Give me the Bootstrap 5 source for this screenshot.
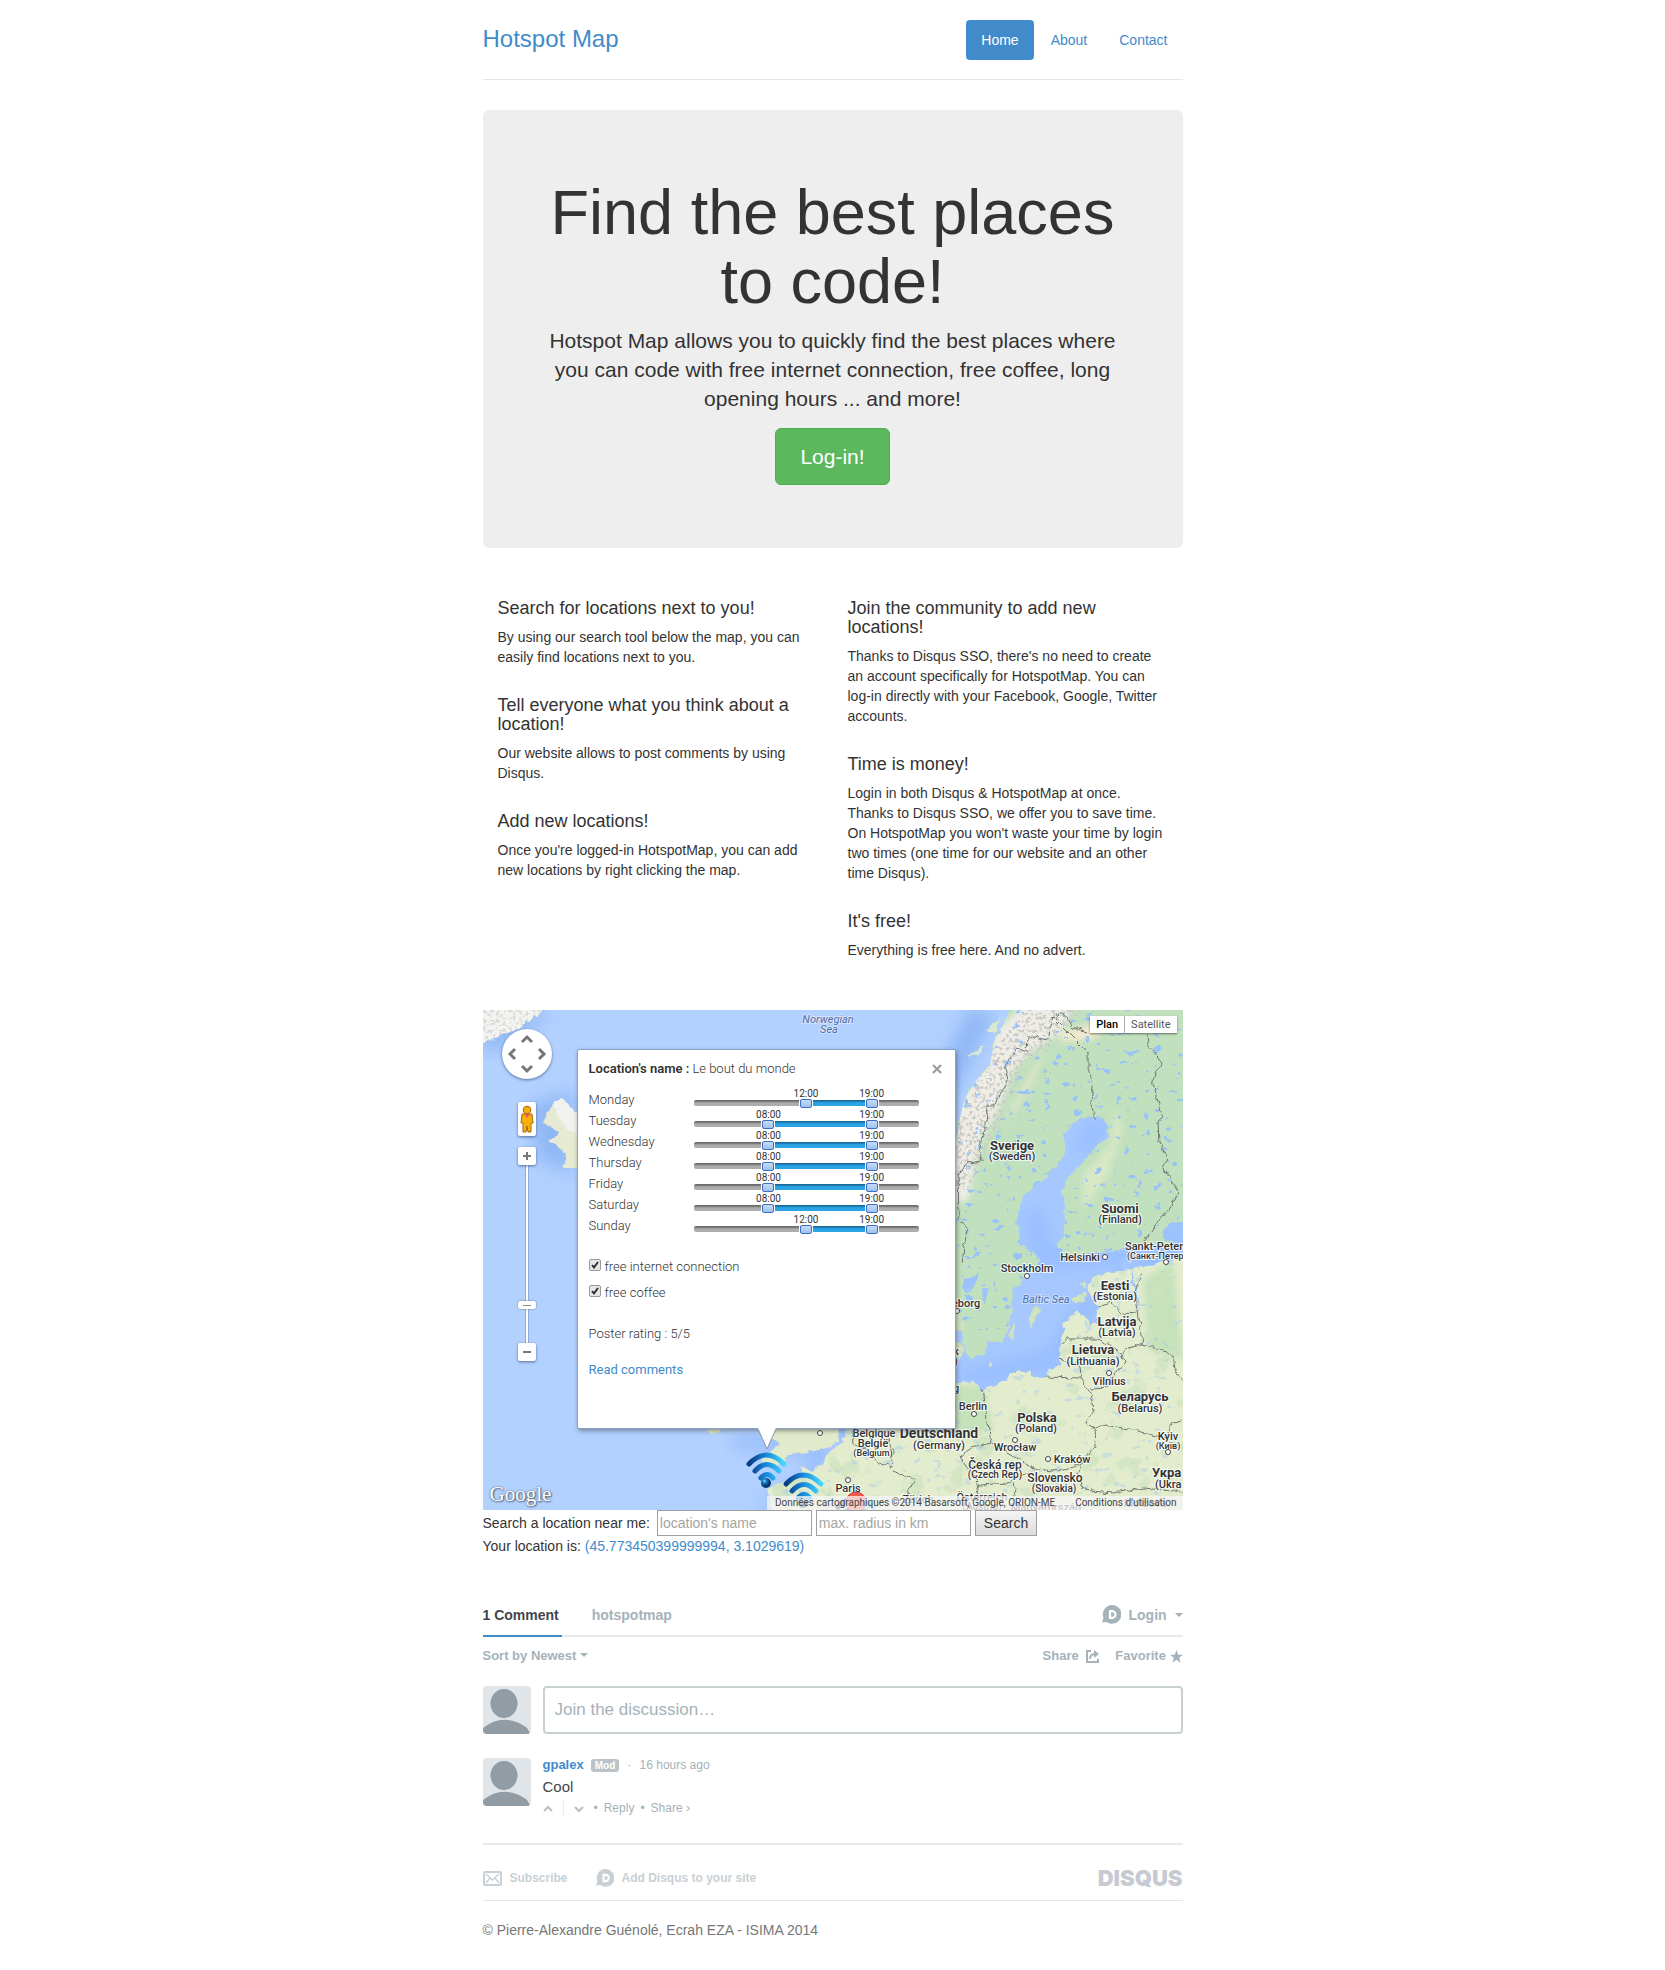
<!DOCTYPE html>
<html lang="en">
<head>
<meta charset="utf-8">
<meta name="viewport" content="width=device-width, initial-scale=1">
<title>Hotspot Map</title>
<link href="https://cdn.jsdelivr.net/npm/bootstrap@5.3.0/dist/css/bootstrap.min.css" rel="stylesheet">
<style>
body{font-family:"Liberation Sans",Arial,sans-serif;font-size:14px;line-height:20px;color:#333}
a{color:#428bca;text-decoration:none}
.page{max-width:700px}
.site-head{padding:20px 0 19px;border-bottom:1px solid #e5e5e5;margin-bottom:30px}
.brand{font-size:24px;line-height:38px;color:#428bca;font-weight:400}
.nav-pills{gap:2px}
.nav-pills .nav-link{padding:10px 15px;color:#428bca;border-radius:4px}
.nav-pills .nav-link.active{background:#428bca;color:#fff}
.hero{background:#eee;border-radius:6px;padding:68px 60px 63px;text-align:center}
.hero h1{font-size:63px;line-height:69px;font-weight:400;margin-bottom:10px}
.hero p{font-size:21px;line-height:29px;margin-bottom:15px}
.btn-login{background:#5cb85c;border:1px solid #4cae4c;color:#fff;font-size:21px;line-height:27px;padding:14px 24px;border-radius:6px}
.feature-row{margin:51px 0 50px}
.feature-row .col-6{padding:0 15px}
.feature-row h4{font-size:18px;line-height:19px;font-weight:400;margin-bottom:9px}
.feature-row p{margin-bottom:29px}
.feature-row p:last-child{margin-bottom:0}
/* map */
.map-box{position:relative;height:500px;overflow:hidden;background:#b3d1ff;font-family:Roboto,sans-serif}
.map-art{position:absolute;inset:0;width:100%;height:100%}
.map-ctl{position:absolute;background:#fff;border:0;padding:0;border-radius:2px;box-shadow:0 1px 3px rgba(40,70,120,.7);display:flex;align-items:center;justify-content:center}
.ctl-pan{left:19px;top:19px;width:50px;height:50px;border-radius:50%}
.ctl-peg{left:35px;top:92px;width:18px;height:34px}
.ctl-in{left:35px;top:137px;width:18px;height:18px}
.ctl-out{left:35px;top:333px;width:18px;height:18px}
.zoom-range{position:absolute;left:-45px;top:235px;width:178px;height:18px;margin:0;transform:rotate(-90deg);-webkit-appearance:none;appearance:none;background:linear-gradient(transparent 7px,#8fabd6 7px,#8fabd6 8px,#fff 8px,#fff 10px,#8fabd6 10px,#8fabd6 11px,transparent 11px)}
.zoom-range::-webkit-slider-thumb{-webkit-appearance:none;width:8px;height:18px;border-radius:2px;background:linear-gradient(90deg,transparent 3px,#888 3px,#888 4px,transparent 4px) center/100% 8px no-repeat,#fff;box-shadow:0 0 2px #567}
.map-type{position:absolute;top:6px;right:6px;background:#fff;box-shadow:0 1px 2px rgba(0,0,0,.5)}
.map-type button{border:0;background:#fff;font-size:11px;line-height:17px;padding:0 6px;color:#565656}
.map-type button:first-child{color:#000;font-weight:500;border-right:1px solid #aaa}
.map-credit{position:absolute;right:0;bottom:0;height:14px;padding:0 6px 0 8px;gap:20px;background:rgba(245,245,245,.75);font-size:10px;line-height:14px;color:#444}
.map-credit a{color:#444}
.g-logo{position:absolute;left:7px;bottom:6px;font:21px/20px "Liberation Serif",serif;color:#fff;text-shadow:0 0 2px #456,1px 1px 2px #567}
/* info window */
.info-pop{position:absolute;left:94px;top:39px;width:379px;height:380px;background:#fff;border:1px solid #87a2cb;border-radius:2px;box-shadow:1px 2px 4px rgba(60,60,60,.5);padding:8px 11px;font-size:13px;line-height:21px;font-weight:300}
.info-pop b{font-weight:600}
.info-tip{position:absolute;left:273px;top:418px;width:22px;height:22px}
.info-pop .btn-x{background:none;border:0;padding:0;line-height:0}
.day-list{margin-top:10px}
.day-line{height:21px}
.day-name{width:105px}
.slot{position:relative;width:225px;height:21px}
.slot-track{position:absolute;left:0;right:0;top:11px;height:6px;border-radius:2px;background:linear-gradient(#6b6b6b 1px,#8e8e8e 2px,#adadad 3px)}
.slot-fill{position:absolute;top:0;bottom:0;background:linear-gradient(#1d6a96 1px,#2196d6 2px,#2ba3e4 3px)}
.slot output{position:absolute;top:0;width:40px;margin-left:-20px;text-align:center;font-size:10px;line-height:10px;font-weight:400;padding:0}
.slot input{position:absolute;left:-6px;width:237px;top:10px;height:9px;margin:0;-webkit-appearance:none;appearance:none;background:none;pointer-events:none}
.slot input::-webkit-slider-thumb{-webkit-appearance:none;pointer-events:auto;width:12px;height:9px;border:1px solid #3f6cc4;border-radius:2px;background:linear-gradient(#c5dcf6,#9cc3ee);box-shadow:0 0 0 1px #fff}
.opt-list{margin-top:17px}
.opt-line{height:26px;gap:4px}
.opt-line input{-webkit-appearance:none;appearance:none;width:12px;height:12px;margin:0;border:1px solid #999;border-radius:2px;background:#e6e6e6;margin-bottom:3px}
.opt-line input:checked{background:url("data:image/svg+xml,%3Csvg xmlns='http://www.w3.org/2000/svg' viewBox='0 0 10 10'%3E%3Cpath d='M2 5.2 4 7.4 8 2' fill='none' stroke='%23333' stroke-width='2'/%3E%3C/svg%3E") #e6e6e6}
.rating{margin-top:18px}
.more-link{margin-top:15px}
.more-link a{font-weight:400}
/* search */
.search-line{gap:4px;height:26px}
.search-line label{margin-right:3px}
.search-line input,.search-line button{height:26px;border:1px solid #a0a0a0;font-size:14px;color:#333}
.search-line input{width:155px;padding:0 2px}
.search-line input::placeholder{color:#a5a5a0}
.search-line button{padding:0 8px;background:linear-gradient(#f4f4f4,#dcdcdc)}
/* comments */
.dq{margin-top:49px;color:#a5b2b9}
.dq a,.dq button{color:#a5b2b9}
.dq-tabs{border-bottom:2px solid #e7ebec;font-weight:700;height:32px;gap:30px}
.dq-tabs .tab-on{color:#3f4549;border-bottom:2px solid #428bca;height:32px;padding-right:3px}
.dq-bar{font-size:13px;font-weight:700;margin-top:9px}
.dq-bar,.dq-tabs{line-height:20px}
.bare{background:none;border:0;padding:0;font-weight:inherit}
.tri{display:inline-block;border:4px solid transparent;border-top-color:#a5b2b9;border-bottom:0;vertical-align:3px;margin-left:4px}
.who{width:48px;height:48px;border-radius:4px;flex:none}
.thread-row{gap:12px;margin-top:20px}
.join{border:2px solid #c9d0d3;border-radius:4px;height:48px;padding:0 10px;font-size:17px;width:100%}
.join::placeholder{color:#a5b2b9}
.dq-post{margin-top:24px;height:85px}
.dq-meta{font-size:13px;line-height:14px}
.dq-meta .author{color:#428bca;font-weight:700;margin-right:7px}
.mod-tag{background:#bcc3c8;color:#fff;font-size:10px;line-height:13px;font-weight:700;border-radius:3px;padding:0 4px}
.when{font-size:12px}
.post-text{font-size:15px;line-height:20px;color:#3f4549;margin-top:5px}
.dq-acts{font-size:12px;line-height:22px;gap:6px}
.dq-foot{border-top:2px solid #e7ebec;height:57px;padding-top:15px;font-size:12px;font-weight:700}
.dq-foot a{color:#c9d0d5}
.dq-foot .dq-word{font-family:Inter,sans-serif;font-size:22px;font-weight:900;color:#c7cad2}
.site-foot{border-top:1px solid #e5e5e5;padding:19px 0 30px;color:#777}
</style>
</head>
<body>
<div class="page container-fluid mx-auto p-0">
<header class="site-head d-flex justify-content-between">
<h3 class="brand m-0">Hotspot Map</h3>
<nav><ul class="nav nav-pills">
<li class="nav-item"><a class="nav-link active" href="#">Home</a></li>
<li class="nav-item"><a class="nav-link" href="#">About</a></li>
<li class="nav-item"><a class="nav-link" href="#">Contact</a></li>
</ul></nav>
</header>

<section class="hero">
<h1>Find the best places to code!</h1>
<p>Hotspot Map allows you to quickly find the best places where you can code with free internet connection, free coffee, long opening hours ... and more!</p>
<button type="button" class="btn btn-login d-block mx-auto">Log-in!</button>
</section>

<section class="row feature-row">
<div class="col-6">
<h4>Search for locations next to you!</h4>
<p>By using our search tool below the map, you can easily find locations next to you.</p>
<h4>Tell everyone what you think about a location!</h4>
<p>Our website allows to post comments by using Disqus.</p>
<h4>Add new locations!</h4>
<p>Once you're logged-in HotspotMap, you can add new locations by right clicking the map.</p>
</div>
<div class="col-6">
<h4>Join the community to add new locations!</h4>
<p>Thanks to Disqus SSO, there's no need to create an account specifically for HotspotMap. You can log-in directly with your Facebook, Google, Twitter accounts.</p>
<h4>Time is money!</h4>
<p>Login in both Disqus &amp; HotspotMap at once. Thanks to Disqus SSO, we offer you to save time. On HotspotMap you won't waste your time by login two times (one time for our website and an other time Disqus).</p>
<h4>It's free!</h4>
<p>Everything is free here. And no advert.</p>
</div>
</section>

<section class="map-box">
<svg class="map-art" viewBox="0 0 700 500" preserveAspectRatio="xMidYMid slice" aria-label="Map of northern Europe">
<defs>
<filter id="rough" x="-5%" y="-5%" width="110%" height="110%" color-interpolation-filters="sRGB"><feTurbulence type="fractalNoise" baseFrequency=".12" numOctaves="3" seed="4"/><feDisplacementMap in="SourceGraphic" scale="7" xChannelSelector="R" yChannelSelector="G"/></filter>
<filter id="lakes" x="0" y="0" width="100%" height="100%" color-interpolation-filters="sRGB"><feTurbulence type="fractalNoise" baseFrequency=".1 .14" numOctaves="4" seed="11"/><feColorMatrix values="0 0 0 0 .6  0 0 0 0 .76  0 0 0 0 .97  0 22 0 0 -15"/><feComposite in2="SourceGraphic" operator="in"/></filter>
<filter id="relief" x="0" y="0" width="100%" height="100%" color-interpolation-filters="sRGB"><feTurbulence type="fractalNoise" baseFrequency=".3" numOctaves="3" seed="7"/><feColorMatrix values="0 0 0 0 .8  0 0 0 0 .8  0 0 0 0 .78  0 0 8 0 -4.1"/><feComposite in2="SourceGraphic" operator="in"/></filter>
<filter id="patch" x="0" y="0" width="100%" height="100%" color-interpolation-filters="sRGB"><feTurbulence type="fractalNoise" baseFrequency=".045" numOctaves="4" seed="21"/><feColorMatrix values="0 0 0 0 .8  0 0 0 0 .89  0 0 0 0 .75  8 0 0 0 -4.6"/><feComposite in2="SourceGraphic" operator="in"/></filter>
<filter id="soft"><feGaussianBlur stdDeviation="9"/></filter>
<filter id="soft2"><feGaussianBlur stdDeviation="3"/></filter>
<linearGradient id="wifi"><stop offset="0" stop-color="#083a80"/><stop offset=".45" stop-color="#1583d6"/><stop offset="1" stop-color="#45d8ff"/></linearGradient>
<radialGradient id="ball" cx=".35" cy=".3"><stop offset="0" stop-color="#8fdcff"/><stop offset=".4" stop-color="#1a7cc8"/><stop offset="1" stop-color="#06386f"/></radialGradient>
<path id="north" d="M530-5 520 15 512 28 507 55 492 72 482 88 477 108 474 128 466 150V305L473 312 478 322 482 342 490 349 500 345 505 332 520 332 525 318 530 295 529 282 539 270 547 262 556 250 549 242 537 235 534 212 539 188 557 172 574 157 582 142 580 128 587 115 604 106 620 108 626 118 624 128 614 135 604 148 585 168 579 182 582 198 581 222 575 235 580 245 607 243 637 240 664 235 705 240V-5Z"/>
<path id="south" d="M705 240 690 250 659 257 637 262 614 265 605 275 607 285 615 295 614 313 607 315 600 305 594 300 582 312 578 325 577 355 565 360 562 368 550 367 547 362 534 362 517 372 500 382 490 370 466 374V400L365 412 360 432 345 443 340 453 327 462 317 455 322 468 300 472 284 478 287 490 290 505H705Z"/>
<g id="wave"><path d="M3 12Q20-6 38 12M9 19Q21 6 33 19M15 26Q21 19 27 26" fill="none" stroke="url(#wifi)" stroke-width="5" stroke-linecap="round"/><circle cx="20" cy="31" r="5" fill="url(#ball)"/></g>
</defs>
<rect width="700" height="500" fill="#b3d1ff"/>
<path d="M500 0 455 90 450 390 350 420" fill="none" stroke="#8fb7f5" stroke-width="26" filter="url(#soft)"/>
<path d="M45 95 90 80V165L55 150Z" fill="#8fb7f5" filter="url(#soft)"/>
<path d="M0 5 70 0 30 32 0 45Z" fill="#8fb7f5" filter="url(#soft)"/>
<path d="M250 430 340 440 330 470 280 500" fill="none" stroke="#93b9f8" stroke-width="14" filter="url(#soft)"/>
<path d="M530 100H640V380H466V250H530Z" fill="#a6c8ff"/>
<path d="M620 110 600 140M550 200 560 250 700 240 600 300 570 350 480 370" fill="none" stroke="#93baff" stroke-width="14" filter="url(#soft)"/>
<g filter="url(#rough)">
<path d="M-5-5H66L47 10 27 22-5 35Z" fill="#f3f4f2"/>
<path d="M60 112 69 95 79 87 87 98 98 105V158H80L84 146 75 135 65 131 77 123Z" fill="#e6ead2"/>
<path d="M69 95 79 87 87 98 98 105 96 125 80 115Z" fill="#f1f1ee"/>
<use href="#north" fill="#c1e0bd"/><use href="#south" fill="#e3eccd"/>
<path d="M288 412H355L356 432 340 438 307 446 300 452 282 455 278 448 296 435 285 425ZM222 420 246 416 230 424Z" fill="#e1ebcb"/>
<path d="M466 290 476 295 482 320 468 322ZM545 310 553 295 558 298 548 317ZM525 325 532 310 530 330ZM589 288 603 281 602 291 592 295ZM596 274 604 271 602 279ZM505 351 511 353 507 357ZM468 330 480 335 478 350 468 345Z" fill="#cfe3bf"/>
<path d="M502 20 517 8 512 24ZM484 46 503 36 495 44Z" fill="#dbe9d3"/>
<path d="M678 222 690 212 705 215V240L690 235ZM481 268 496 265 489 283 481 282ZM499 280 507 277 501 296ZM505 56 515 67 510 62ZM648 255 658 300 650 280ZM640 40 655 42 647 47Z" fill="#9cc3fb"/>
</g>
<clipPath id="cn"><use href="#north"/></clipPath><clipPath id="cs"><use href="#south"/></clipPath>
<g clip-path="url(#cn)"><g filter="url(#soft2)">
<path d="M540-5H590L578 22 550 40 530 60 515 100 498 130 485 190 466 195V110L484 80 500 55 515 20Z" fill="#efede6"/>
<path d="M575 22 630 10 610 30 580 32ZM565 35 550 70 535 95 520 115" fill="#f0e8cd"/>
<path d="M632 95 640 120 625 165 600 200 600 165 628 135Z" fill="#d9e8c5"/></g>
<rect x="466" width="234" height="320" filter="url(#lakes)"/><path d="M540 0H600L570 30 540 55 515 120 485 180H472V120L505 50Z" filter="url(#relief)"/></g>
<g clip-path="url(#cs)"><path d="M466 375H500L510 420 473 430ZM690 250 660 270 665 340 700 350Z" fill="#c6e2bb" filter="url(#soft2)"/><path d="M470 240H700V500H280V400Z" filter="url(#patch)" opacity=".7"/><path d="M470 240H700V500H280V400Z" filter="url(#lakes)" opacity=".35"/></g>
<path d="M0 0H60L30 22 0 33Z" filter="url(#relief)" opacity=".6"/>
<path filter="url(#rough)" fill="none" stroke="#6c7570" d="M570 7 565 30 545 25 544 42 534 38 522 57 525 70 512 95H504L503 118 494 138 499 150 485 152 475 165 476 208 484 218 479 252M570 7 590 27 605 42V58L610 75 608 92 612 102V110M572 8 580 2 590 17 604 22M664 25 665 35 679 52 669 72 680 108 675 112 676 132 685 148 680 158 696 182 684 202 660 232M659 263 652 280 655 300 659 334M640 345 642 338 659 334M615 296 628 292 640 303 654 304M580 333 585 329 615 329 625 334 640 345M659 334 675 338 690 345 692 360 700 373M577 350 597 355 598 368 562 367M598 368 608 383 610 400 603 410 611 420 612 435 598 455 595 465M608 419 622 415 650 420 670 425 682 428 690 412 700 410M640 345 642 352 630 365 625 377 608 378M500 378 502 395 508 433 520 440 535 448 550 458 575 462 598 455M508 433 490 438 477 446 488 462 497 475 525 473 545 462M497 475 490 490M530 473 533 490M595 465 600 480 630 483 660 478 700 482M369 420 370 433 385 440 395 452 408 458 410 440 405 430M410 460 431 469 420 495"/>
<g font-family="Roboto,sans-serif" text-anchor="middle" paint-order="stroke" stroke="#fff" stroke-opacity=".8" stroke-width="2" fill="#333" font-size="11" font-weight="500">
<g font-style="italic" font-weight="400" fill="#4f6fa3" stroke-opacity=".4"><text x="345" y="13">Norwegian</text><text x="346" y="23">Sea</text><text x="563" y="293">Baltic Sea</text></g>
<g font-size="13" font-weight="700"><text x="529" y="140">Sverige</text><text x="637" y="203">Suomi</text><text x="632" y="280">Eesti</text><text x="634" y="316">Latvija</text><text x="610" y="344">Lietuva</text><text x="657" y="391">Беларусь</text><text x="554" y="412">Polska</text><text x="456" y="428" font-size="14">Deutschland</text><text x="669" y="467" text-anchor="start">Укра</text></g>
<text x="529" y="150">(Sweden)</text><text x="637" y="213">(Finland)</text><text x="632" y="290">(Estonia)</text><text x="634" y="326">(Latvia)</text><text x="610" y="355">(Lithuania)</text><text x="657" y="402">(Belarus)</text><text x="553" y="422">(Poland)</text><text x="456" y="439">(Germany)</text><text x="672" y="478" text-anchor="start">(Ukra</text>
<text x="642" y="240" text-anchor="start">Sankt-Peter</text><text x="644" y="249" font-size="9" text-anchor="start">(Санкт-Петер</text><text x="597" y="251">Helsinki</text><text x="544" y="262">Stockholm</text><text x="483" y="297">eborg</text><text x="626" y="375">Vilnius</text><text x="490" y="400">Berlin</text><text x="532" y="441">Wrocław</text><text x="589" y="453">Kraków</text><text x="685" y="430">Kyiv</text><text x="685" y="439" font-size="9">(Київ)</text><text x="512" y="459" font-size="12">Česká rep</text><text x="512" y="468" font-size="10">(Czech Rep)</text><text x="572" y="472" font-size="12">Slovensko</text><text x="571" y="482" font-size="10">(Slovakia)</text><text x="499" y="491">Österreich</text><text x="499" y="500" font-size="10">(Austria)</text><text x="563" y="501">Magyarország</text><text x="435" y="493">Zürich</text><text x="662" y="497">Moldova</text>
<text x="391" y="427">Belgique</text><text x="390" y="437">België</text><text x="390" y="446" font-size="9">(Belgium)</text><text x="365" y="482">Paris</text><text x="336" y="418">London</text><text x="473" y="345">k</text><text x="473" y="355">)</text><text x="473" y="382">g</text>
</g>
<g fill="#fff" stroke="#444"><circle cx="544" cy="266" r="2.5"/><circle cx="622" cy="247" r="2.5"/><circle cx="683" cy="252" r="2.5"/><circle cx="474" cy="301" r="2.5"/><circle cx="626" cy="363" r="2.5"/><circle cx="491" cy="404" r="2.5"/><circle cx="532" cy="430" r="2.5"/><circle cx="565" cy="449" r="2.5"/><circle cx="685" cy="442" r="2.5"/><circle cx="365" cy="470" r="2.5"/><circle cx="337" cy="423" r="2.5"/></g>
<use href="#wave" x="263" y="442"/><use href="#wave" x="300" y="462"/><use href="#wave" x="352" y="485"/>
<circle cx="373" cy="492" r="10" fill="#ef5b50" stroke="#c7443c"/>
</svg>

<button type="button" class="map-ctl ctl-pan" aria-label="Pan"><svg width="42" height="42" viewBox="0 0 42 42" fill="none" stroke="#777" stroke-width="3"><path d="m16 9 5-5 5 5M16 33l5 5 5-5M9 16l-5 5 5 5M33 16l5 5-5 5"/></svg></button>
<button type="button" class="map-ctl ctl-peg" aria-label="Street View"><svg width="14" height="28" viewBox="0 0 14 28" fill="#f7b10c" stroke="#a8640b"><path d="M2 9h10l1 9h-2v9H8l-1-6-1 6H3v-9H1Z"/><path d="m4 9 3 4 3-4Z" fill="#ee5d5d" stroke="none"/><circle cx="7" cy="5" r="3.8"/></svg></button>
<input class="zoom-range" type="range" min="0" max="100" value="20" aria-label="Zoom level">
<button type="button" class="map-ctl ctl-in" aria-label="Zoom in"><svg width="10" height="10"><path d="M1 5h8M5 1v8" stroke="#777" stroke-width="2"/></svg></button>
<button type="button" class="map-ctl ctl-out" aria-label="Zoom out"><svg width="10" height="10"><path d="M1 5h8" stroke="#777" stroke-width="2"/></svg></button>
<div class="map-type d-flex"><button type="button">Plan</button><button type="button">Satellite</button></div>
<div class="g-logo">Google</div>
<div class="map-credit d-flex"><span>Données cartographiques ©2014 Basarsoft, Google, ORION-ME</span><a href="#">Conditions d'utilisation</a></div>

<div class="info-pop">
<div class="d-flex justify-content-between align-items-center"><div><b>Location's name :</b> Le bout du monde</div><button type="button" class="btn-x" aria-label="Close"><svg width="14" height="10"><path d="m3 1 8 8M11 1 3 9" stroke="#999" stroke-width="2"/></svg></button></div>
<div class="day-list">
<div class="d-flex day-line"><div class="day-name">Monday</div><div class="slot"><div class="slot-track"><div class="slot-fill" style="left:50%;right:20.83%"></div></div><output style="left:50%">12:00</output><output style="left:79.17%">19:00</output><input type="range" max="24" value="12" aria-label="Monday opens"><input type="range" max="24" value="19" aria-label="Monday closes"></div></div>
<div class="d-flex day-line"><div class="day-name">Tuesday</div><div class="slot"><div class="slot-track"><div class="slot-fill" style="left:33.33%;right:20.83%"></div></div><output style="left:33.33%">08:00</output><output style="left:79.17%">19:00</output><input type="range" max="24" value="8" aria-label="Tuesday opens"><input type="range" max="24" value="19" aria-label="Tuesday closes"></div></div>
<div class="d-flex day-line"><div class="day-name">Wednesday</div><div class="slot"><div class="slot-track"><div class="slot-fill" style="left:33.33%;right:20.83%"></div></div><output style="left:33.33%">08:00</output><output style="left:79.17%">19:00</output><input type="range" max="24" value="8" aria-label="Wednesday opens"><input type="range" max="24" value="19" aria-label="Wednesday closes"></div></div>
<div class="d-flex day-line"><div class="day-name">Thursday</div><div class="slot"><div class="slot-track"><div class="slot-fill" style="left:33.33%;right:20.83%"></div></div><output style="left:33.33%">08:00</output><output style="left:79.17%">19:00</output><input type="range" max="24" value="8" aria-label="Thursday opens"><input type="range" max="24" value="19" aria-label="Thursday closes"></div></div>
<div class="d-flex day-line"><div class="day-name">Friday</div><div class="slot"><div class="slot-track"><div class="slot-fill" style="left:33.33%;right:20.83%"></div></div><output style="left:33.33%">08:00</output><output style="left:79.17%">19:00</output><input type="range" max="24" value="8" aria-label="Friday opens"><input type="range" max="24" value="19" aria-label="Friday closes"></div></div>
<div class="d-flex day-line"><div class="day-name">Saturday</div><div class="slot"><div class="slot-track"><div class="slot-fill" style="left:33.33%;right:20.83%"></div></div><output style="left:33.33%">08:00</output><output style="left:79.17%">19:00</output><input type="range" max="24" value="8" aria-label="Saturday opens"><input type="range" max="24" value="19" aria-label="Saturday closes"></div></div>
<div class="d-flex day-line"><div class="day-name">Sunday</div><div class="slot"><div class="slot-track"><div class="slot-fill" style="left:50%;right:20.83%"></div></div><output style="left:50%">12:00</output><output style="left:79.17%">19:00</output><input type="range" max="24" value="12" aria-label="Sunday opens"><input type="range" max="24" value="19" aria-label="Sunday closes"></div></div>
</div>
<div class="opt-list">
<div class="opt-line d-flex align-items-center"><input type="checkbox" id="net" checked><label for="net">free internet connection</label></div>
<div class="opt-line d-flex align-items-center"><input type="checkbox" id="cof" checked><label for="cof">free coffee</label></div>
</div>
<div class="rating">Poster rating : 5/5</div>
<div class="more-link"><a href="#comments">Read comments</a></div>
</div>
<svg class="info-tip" viewBox="0 0 22 22"><path d="M2 0 11 21 20 0Z" fill="#fff"/><path d="M2 1 11 21 20 1" fill="none" stroke="#8a98a8"/></svg>
</section>

<form class="search-line d-flex align-items-center" onsubmit="return false">
<label for="loc">Search a location near me:</label>
<input type="text" id="loc" placeholder="location's name">
<input type="text" id="radius" placeholder="max. radius in km" aria-label="Maximum radius in km">
<button type="submit">Search</button>
</form>
<div>Your location is: <a href="#">(45.773450399999994, 3.1029619)</a></div>

<section class="dq" id="comments">
<div class="dq-tabs d-flex">
<a href="#" class="tab-on">1 Comment</a><a href="#">hotspotmap</a>
<button type="button" class="bare ms-auto d-flex align-items-start gap-2"><svg width="19" height="19" viewBox="0 0 19 19"><path d="M10 0a9.400 9.400 0 1 1-5.500 17L0 17.500 1.500 13A9.400 9.400 0 0 1 10 0Z" fill="#a5b2b9"/><path d="M8 6.200h2.200a3.300 3.300 0 0 1 0 6.600H8Z" fill="none" stroke="#fff" stroke-width="2.200"/></svg><span>Login <i class="tri"></i></span></button>
</div>
<div class="dq-bar d-flex"><button type="button" class="bare">Sort by Newest<i class="tri"></i></button>
<a href="#" class="ms-auto">Share <svg width="13" height="13" viewBox="0 0 13 13" class="ms-1"><path d="M5 1H1v11h11V9M4 9q0-5 5-5" fill="none" stroke="#a5b2b9" stroke-width="2"/><path d="m8 0 5 4-5 4Z" fill="#a5b2b9"/></svg></a>
<a href="#" class="ms-3">Favorite <svg width="13" height="13" viewBox="0 0 13 13"><path d="m6.500 0 1.700 4.700H13L9.200 7.800l1.400 5-4.100-3-4.100 3 1.400-5L0 4.700h4.800Z" fill="#a5b2b9"/></svg></a></div>
<div class="d-flex thread-row">
<svg class="who" viewBox="0 0 48 48"><rect width="48" height="48" fill="#dfe5e8"/><ellipse cx="21" cy="17.500" rx="13.500" ry="14.500" fill="#929ca5"/><path d="M0 42Q20 26 43 41 46 44 47 48H0Z" fill="#929ca5"/></svg>
<input type="text" class="join" placeholder="Join the discussion…" aria-label="Join the discussion">
</div>
<div class="d-flex thread-row dq-post">
<svg class="who" viewBox="0 0 48 48"><rect width="48" height="48" fill="#dfe5e8"/><ellipse cx="21" cy="17.500" rx="13.500" ry="14.500" fill="#929ca5"/><path d="M0 42Q20 26 43 41 46 44 47 48H0Z" fill="#929ca5"/></svg>
<div>
<div class="dq-meta d-flex align-items-center"><a href="#" class="author">gpalex</a><span class="mod-tag">Mod</span><span class="mx-2">·</span><a href="#" class="when">16 hours ago</a></div>
<div class="post-text">Cool</div>
<div class="dq-acts d-flex align-items-center"><button type="button" class="bare lh-1" aria-label="Vote up"><svg width="10" height="8"><path d="m1 6 4-4 4 4" fill="none" stroke="#b4bfc5" stroke-width="2"/></svg></button><span class="vr my-1 ms-1"></span><button type="button" class="bare lh-1 mx-1" aria-label="Vote down"><svg width="10" height="8"><path d="m1 2 4 4 4-4" fill="none" stroke="#b4bfc5" stroke-width="2"/></svg></button><span>•</span><a href="#">Reply</a><span>•</span><a href="#">Share ›</a></div>
</div>
</div>
<div class="dq-foot d-flex align-items-start">
<div class="d-flex align-items-center w-100 mt-2">
<a href="#" class="d-flex align-items-center"><svg width="19" height="15" viewBox="0 0 19 15" class="me-2" fill="none" stroke="#c9d0d5"><rect x="1" y="1" width="17" height="13" rx="1" stroke-width="2"/><path d="m3 3 6.500 6L16 3M3 12l4-5m9 5-4-5" stroke-width="1.500"/></svg>Subscribe</a>
<a href="#" class="d-flex align-items-center ms-4 ps-1"><svg width="18" height="18" viewBox="0 0 19 19" class="me-2"><path d="M10 0a9.400 9.400 0 1 1-5.500 17L0 17.500 1.500 13A9.400 9.400 0 0 1 10 0Z" fill="#c9d0d5"/><path d="M8 6.200h2.200a3.300 3.300 0 0 1 0 6.600H8Z" fill="none" stroke="#fff" stroke-width="2.200"/></svg>Add Disqus to your site</a>
<a href="#" class="dq-word ms-auto">DISQUS</a>
</div>
</div>
</section>
<footer class="site-foot">© Pierre-Alexandre Guénolé, Ecrah EZA - ISIMA 2014</footer>
</div>
<script src="https://cdn.jsdelivr.net/npm/bootstrap@5.3.0/dist/js/bootstrap.bundle.min.js"></script>
</body>
</html>
